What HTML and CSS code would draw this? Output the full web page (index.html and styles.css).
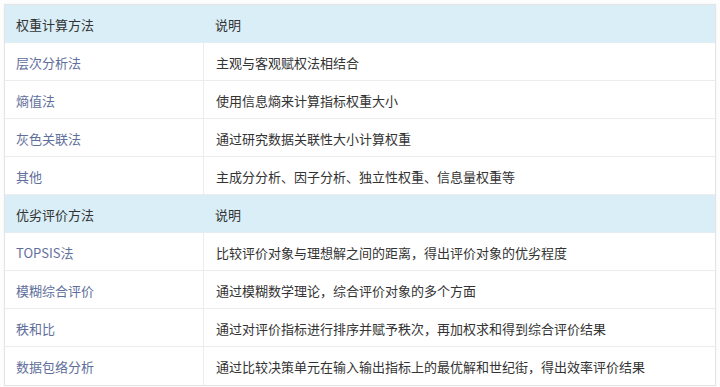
FILE: index.html
```html
<!DOCTYPE html>
<html lang="zh">
<head>
<meta charset="utf-8">
<link rel="stylesheet" href="styles.css">
</head>
<body>
<div class="table">
  <div class="cell head">权重计算方法</div><div class="cell head">说明</div>
  <div class="cell name">层次分析法</div><div class="cell desc">主观与客观赋权法相结合</div>
  <div class="cell name">熵值法</div><div class="cell desc">使用信息熵来计算指标权重大小</div>
  <div class="cell name">灰色关联法</div><div class="cell desc">通过研究数据关联性大小计算权重</div>
  <div class="cell name">其他</div><div class="cell desc">主成分分析、因子分析、独立性权重、信息量权重等</div>
  <div class="cell head">优劣评价方法</div><div class="cell head">说明</div>
  <div class="cell name">TOPSIS法</div><div class="cell desc">比较评价对象与理想解之间的距离，得出评价对象的优劣程度</div>
  <div class="cell name">模糊综合评价</div><div class="cell desc">通过模糊数学理论，综合评价对象的多个方面</div>
  <div class="cell name">秩和比</div><div class="cell desc">通过对评价指标进行排序并赋予秩次，再加权求和得到综合评价结果</div>
  <div class="cell name last">数据包络分析</div><div class="cell desc last">通过比较决策单元在输入输出指标上的最优解和世纪街，得出效率评价结果</div>
</div>
</body>
</html>
```
FILE: styles.css
```css
html, body {
  margin: 0;
  padding: 0;
  background: #fdfdfd;
}
body {
  padding: 4px;
  font-family: "Noto Sans CJK SC", "Noto Sans", sans-serif;
  font-size: 13px;
  color: #333;
}
.table {
  width: 712px;
  box-sizing: border-box;
  display: grid;
  grid-template-columns: 199px 1fr;
  border: 1px solid #e4e4e4;
  background: #fff;
  box-shadow: 0 0 2px rgba(0,0,0,0.04);
}
.cell {
  height: 38px;
  box-sizing: border-box;
  padding: 1px 11px 0;
  display: flex;
  align-items: center;
  border-bottom: 1px solid #ececec;
  white-space: nowrap;
}
.cell:nth-child(odd) {
  border-right: 1px solid #ececec;
}
.head {
  background: #d9eef7;
  color: #333;
  border-bottom-color: #e2eef3;
}
.head:nth-child(odd) {
  border-right-color: #d9eef7;
}
.name {
  color: #5f6f9c;
}
.desc {
  color: #333;
  padding-left: 12px;
}
.last {
  border-bottom: none;
}
```
